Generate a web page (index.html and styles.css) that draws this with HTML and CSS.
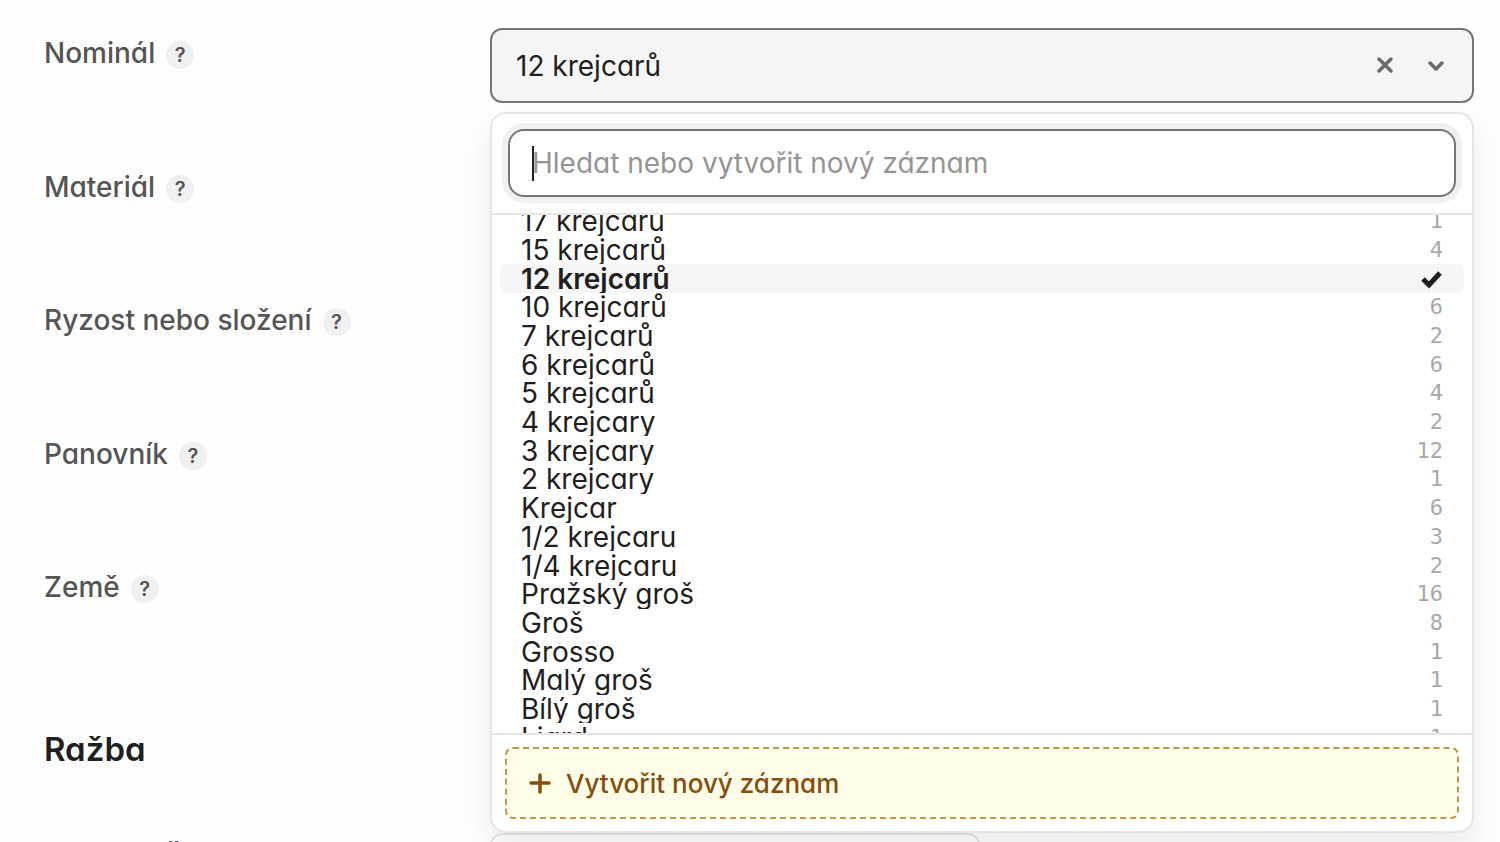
FILE: index.html
```html
<!DOCTYPE html>
<html lang="cs">
<head>
  <meta charset="UTF-8">
  <meta name="viewport" content="width=device-width, initial-scale=1">
  <title>Nominál</title>
  <link rel="stylesheet" href="styles.css">
</head>
<body>
  <main class="form">
    <section class="fields">
      <div class="field">
        <div class="label"><label for="nominal">Nominál</label><button class="help" type="button">?</button></div>
        <div class="control">
          <div class="select">
            <button class="select-value" id="nominal" type="button">12 krejcarů</button>
            <button class="icon-button" type="button" aria-label="Vymazat">
              <svg width="24" height="24" viewBox="0 0 24 24"><path d="M6 5l12 12M18 5L6 17"/></svg>
            </button>
            <button class="icon-button" type="button" aria-label="Otevřít">
              <svg width="24" height="24" viewBox="0 0 24 24"><path d="M6 9l6 6 6-6"/></svg>
            </button>
          </div>

          <div class="dropdown">
            <div class="search">
              <input type="text" placeholder="Hledat nebo vytvořit nový záznam" aria-label="Hledat">
            </div>
            <div class="list">
              <ul class="options">
                <li><span>17 krejcarů</span><small>1</small></li>
                <li><span>15 krejcarů</span><small>4</small></li>
                <li class="selected"><span>12 krejcarů</span><svg width="24" height="24" viewBox="0 0 24 24"><path d="M4 12l6 6L21 6"/></svg></li>
                <li><span>10 krejcarů</span><small>6</small></li>
                <li><span>7 krejcarů</span><small>2</small></li>
                <li><span>6 krejcarů</span><small>6</small></li>
                <li><span>5 krejcarů</span><small>4</small></li>
                <li><span>4 krejcary</span><small>2</small></li>
                <li><span>3 krejcary</span><small>12</small></li>
                <li><span>2 krejcary</span><small>1</small></li>
                <li><span>Krejcar</span><small>6</small></li>
                <li><span>1/2 krejcaru</span><small>3</small></li>
                <li><span>1/4 krejcaru</span><small>2</small></li>
                <li><span>Pražský groš</span><small>16</small></li>
                <li><span>Groš</span><small>8</small></li>
                <li><span>Grosso</span><small>1</small></li>
                <li><span>Malý groš</span><small>1</small></li>
                <li><span>Bílý groš</span><small>1</small></li>
                <li><span>Liard</span><small>1</small></li>
              </ul>
            </div>
            <div class="footer">
              <button class="create" type="button">
                <svg width="24" height="24" viewBox="0 0 24 24"><path d="M12 4v17M3 12h18"/></svg>
                Vytvořit nový záznam
              </button>
            </div>
          </div>
        </div>
      </div>
      <div class="field">
        <div class="label"><span>Materiál</span><button class="help" type="button">?</button></div>
      </div>
      <div class="field">
        <div class="label"><span>Ryzost nebo složení</span><button class="help" type="button">?</button></div>
      </div>
      <div class="field">
        <div class="label"><span>Panovník</span><button class="help" type="button">?</button></div>
      </div>
      <div class="field">
        <div class="label"><span>Země</span><button class="help" type="button">?</button></div>
      </div>
    </section>

    <h2>Ražba</h2>
    <div class="field">
      <div class="label"><label for="number">Katalog. Č.</label></div>
      <div class="control"><input class="short" id="number" type="text"></div>
    </div>
  </main>
</body>
</html>
```
FILE: styles.css
```css
* {
  box-sizing: border-box;
}
body {
  margin: 0;
  height: 100vh;
  overflow: hidden;
  background: #fefefe;
  color: #1f1f1f;
  font-family: Inter, sans-serif;
  font-size: 28px;
  font-feature-settings: "cv11";
}
button, input {
  font: inherit;
  font-feature-settings: inherit;
  color: inherit;
}
button {
  border: none;
  background: none;
  padding: 0;
  cursor: pointer;
}
svg {
  fill: none;
  stroke: currentColor;
  stroke-width: 3.5;
  stroke-linecap: round;
  stroke-linejoin: round;
  flex: none;
}
.form {
  padding: 28px 26px 0 44px;
}
.fields {
  display: grid;
  grid-auto-rows: 1fr;
  row-gap: 58px;
  height: 610px;
}
.field {
  display: grid;
  grid-template-columns: 446px 1fr;
  align-items: start;
}
.label {
  display: flex;
  align-items: center;
  gap: 11px;
  padding-top: 8px;
  line-height: 34px;
  font-weight: 500;
  color: #555;
}
.help {
  width: 28px;
  height: 28px;
  margin-top: 4px;
  border-radius: 50%;
  background: #f0f0f0;
  font-size: 20px;
  font-weight: 600;
  line-height: 28px;
}
.control {
  position: relative;
}
.select {
  display: flex;
  align-items: center;
  gap: 27px;
  height: 75px;
  padding: 0 24px;
  border: 2px solid #757575;
  border-radius: 12px;
  background: #f5f5f5;
}
.select-value {
  flex: 1;
  text-align: left;
}
.icon-button {
  display: flex;
  color: #6b6b6b;
}

/* dropdown */
.dropdown {
  position: absolute;
  top: 84px;
  left: 0;
  right: 0;
  z-index: 1;
  border: 2px solid #e5e5e5;
  border-radius: 16px;
  background: #fff;
  box-shadow: 0 16px 32px rgba(0, 0, 0, 0.08);
}
.search {
  position: relative;
  padding: 15px 16px 16px;
  border-bottom: 2px solid #e5e5e5;
}
.search input {
  display: block;
  width: 100%;
  height: 68px;
  padding: 0 22px;
  border: 2px solid #757575;
  border-radius: 16px;
  outline: none;
  background: #fff;
  box-shadow: 0 0 0 6px #f0f0f0;
}
.search input::placeholder {
  color: #949494;
  opacity: 1;
}
/* text cursor */
.search::after {
  content: "";
  position: absolute;
  top: 32px;
  left: 40px;
  width: 2px;
  height: 35px;
  background: #1f1f1f;
}
.list {
  height: 518px;
  overflow: hidden;
}
.options {
  display: grid;
  grid-auto-rows: 1fr;
  height: 545px;
  margin: -8px 0 0;
  padding: 0 8px;
  list-style: none;
}
.options li {
  display: flex;
  align-items: center;
  justify-content: space-between;
  min-height: 0;
  padding: 0 21px;
  border-radius: 8px;
  overflow: hidden;
  line-height: 28px;
}
.options small {
  font-family: "DejaVu Sans Mono", monospace;
  font-size: 22px;
  color: #a8a8a8;
}
.options .selected {
  background: #f5f5f5;
  font-weight: 600;
}
.options svg {
  stroke-width: 5;
  stroke-linecap: butt;
  stroke-linejoin: miter;
}
.footer {
  padding: 12px 13px;
  border-top: 2px solid #e5e5e5;
}
.create {
  display: flex;
  align-items: center;
  gap: 14px;
  width: 100%;
  height: 72px;
  padding: 0 21px;
  border: 2px dashed #c0964a;
  border-radius: 8px;
  background: #fffde8;
  color: #854d0e;
  font-size: 26px;
  font-weight: 500;
}

h2 {
  margin: 90px 0 63px;
  font-size: 33px;
  font-weight: 600;
  line-height: 42px;
}
.short {
  width: 490px;
  height: 75px;
  border: 2px solid #e5e5e5;
  border-radius: 12px;
  background: #fff;
}
```
